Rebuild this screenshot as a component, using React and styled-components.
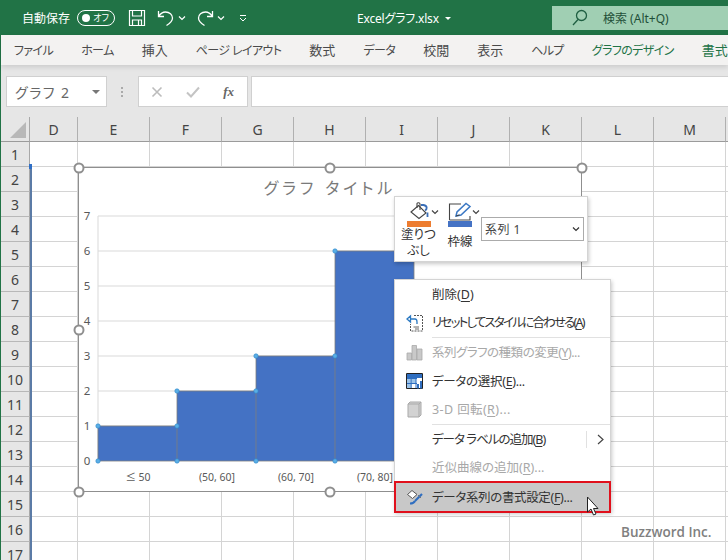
import React from "react";
import styled, { createGlobalStyle } from "styled-components";

const Global = createGlobalStyle`
  html, body { margin: 0; padding: 0; background: #fff; }
  body { font-family: "Noto Sans", "Noto Sans CJK JP", sans-serif; font-feature-settings: "palt"; overflow: hidden; }
  * { box-sizing: border-box; }
`;

const Page = styled.div`
  position: relative; width: 728px; height: 560px; overflow: hidden;
  display: flex; flex-direction: column; background: #fff;
`;
const TitleBar = styled.header`
  height: 35px; flex: none; background: #217346; color: #fff;
  display: flex; align-items: center; font-size: 12px; padding-left: 22px;
`;
const AutoSave = styled.span` width: 55px; `;
const Toggle = styled.span`
  width: 38px; height: 16px; border: 1px solid #fff; border-radius: 8px;
  display: flex; align-items: center; justify-content: space-between; padding: 0 5px 0 4px;
  font-size: 9px; margin-right: 13px;
  &::before { content: ""; width: 8px; height: 8px; border-radius: 50%; background: #fff; }
`;
const QuickIcons = styled.div` display: flex; align-items: center; `;
const Gap = styled.span` width: ${p => p.$w}px; flex: none; `;
const FileName = styled.div`
  margin-left: 110px; display: flex; align-items: center; gap: 6px; white-space: nowrap; font-size: 12px; letter-spacing: -.2px;
  &::after { content: ""; border: 3px solid transparent; border-top: 3px solid #fff; border-bottom: 0; margin-top: 1px; }
`;
const SearchBox = styled.div`
  margin-left: auto; width: 176px; height: 24px; background: #a0cfb3; color: #1f4f38;
  display: flex; align-items: center; padding-left: 20px; gap: 15px; font-size: 12px;
`;
const Body = styled.div`
  flex: 1; display: flex; flex-direction: column; border-left: 1px solid #217346; position: relative; min-height: 0;
`;
const Tabs = styled.nav`
  height: 30px; flex: none; background: #f3f2f1; display: flex; align-items: center; gap: 28px;
  padding: 0 0 1px 13px; white-space: nowrap; position: relative;
  box-shadow: 0 2px 5px rgba(0,0,0,.12);
`;
const Tab = styled.span`
  color: ${p => p.$accent ? "#217346" : "#4a4a4a"};
  font-size: ${p => p.$kanji ? 13 : 12}px;
  letter-spacing: ${p => p.$kanji ? 0 : -0.6}px;
`;
const FormulaArea = styled.div`
  height: 52px; flex: none; background: #e6e6e6; padding: 11px 0 10px 5px; display: flex; align-items: stretch;
`;
const NameBox = styled.div`
  width: 101px; background: #fff; border: 1px solid #d0d0d0; display: flex; align-items: center;
  justify-content: space-between; padding: 0 7px 0 8px; color: #666; font-size: 14px; letter-spacing: 1.5px;
  &::after { content: ""; border: 4px solid transparent; border-top: 4px solid #777; border-bottom: 0; margin-right: -1px; }
`;
const Dots = styled.div`
  width: 31px; display: flex; flex-direction: column; align-items: center; justify-content: center; gap: 2px; padding-right: 2px;
  i { width: 2px; height: 2px; background: #aaa; display: block; }
`;
const FxBox = styled.div`
  width: 110px; background: #fff; border: 1px solid #d0d0d0; display: flex; align-items: center;
  justify-content: space-between; padding: 0 13px 0 12px;
`;
const Fx = styled.span` font-family: "Liberation Serif", serif; font-style: italic; font-weight: 700; font-size: 13px; color: #666; `;
const FormulaInput = styled.div` flex: 1; margin-left: 3px; background: #fff; border: 1px solid #d0d0d0; border-right: 0; `;
const SheetWrap = styled.div` flex: 1; position: relative; min-height: 0; overflow: hidden; `;
const SheetGrid = styled.div`
  display: grid; grid-template-columns: 29px 48px repeat(10, 72px); grid-auto-rows: 25px;
`;
const Corner = styled.div`
  background: #e6e6e6; border-right: 1px solid #a8a8a8; border-bottom: 1px solid #9b9b9b; position: relative;
  &::after { content: ""; position: absolute; right: 3px; bottom: 3px; border-style: solid; border-width: 0 0 16px 16px; border-color: transparent transparent #b8b8b8 transparent; }
`;
const ColHead = styled.div`
  background: #e6e6e6; border-right: 1px solid #b0b0b0; border-bottom: 1px solid #9b9b9b;
  display: flex; align-items: center; justify-content: center; font-size: 14px; color: #444; font-family: "Noto Sans", sans-serif;
`;
const RowHead = styled.div`
  background: #e6e6e6; border-right: 1px solid #a8a8a8; border-bottom: 1px solid #b8b8b8;
  display: flex; align-items: center; justify-content: center; font-size: 14px; color: #444;
`;
const Cell = styled.div` border-right: 1px solid #d4d4d4; border-bottom: 1px solid #d4d4d4; `;
const RangeLine = styled.div`
  position: absolute; left: 29px; top: 49px; bottom: 0; width: 1.5px; background: #5b7ba6;
  &::before { content: ""; position: absolute; left: -1px; top: -2px; width: 3px; height: 5px; background: #2f6fc6; }
`;
const ChartFrame = styled.div`
  position: absolute; left: 77px; top: 50px; width: 504px; height: 325px; background: #fff; border: 1px solid #8f8f8f;
  svg { display: block; position: absolute; left: -1px; top: -1px; }
`;
const Handle = styled.span`
  position: absolute; width: 11px; height: 11px; border-radius: 50%; background: #fff; border: 2px solid #8f8f8f;
  left: ${p => p.$x}px; top: ${p => p.$y}px; transform: translate(-50%, -50%);
`;
const MiniBar = styled.div`
  position: absolute; left: 393px; top: 79px; width: 194px; height: 66px; background: #fff;
  border: 1px solid #d4d4d4; box-shadow: 1px 2px 4px rgba(0,0,0,.22);
  display: flex; align-items: flex-start; padding: 5px 0 0 3px; font-size: 12.5px; color: #333;
`;
const MiniTool = styled.div`
  width: ${p => p.$w}px; flex: none; display: flex; flex-direction: column; align-items: center; line-height: 16px;
  svg { display: block; }
`;
const ToolIcon = styled.div` display: flex; align-items: center; `;
const Swatch = styled.div` width: 24px; height: 6px; background: ${p => p.$c}; margin-left: -8px; margin-bottom: ${p => p.$mb}px; `;
const Label = styled.div` text-align: center; margin-left: -8px; width: 36px; `;
const SeriesSelect = styled.div`
  width: 103px; height: 24px; margin-top: 15px; border: 1px solid #ababab; display: flex; align-items: center;
  justify-content: space-between; padding: 0 3px; font-size: 12px; color: #444; letter-spacing: .5px;
`;
const Menu = styled.div`
  position: absolute; left: 393px; top: 162px; width: 217px; height: 233px; background: #fff;
  border: 1px solid #d4d4d4; box-shadow: 1px 2px 4px rgba(0,0,0,.22); font-size: 12.5px; color: #333;
`;
const Item = styled.div`
  height: ${p => p.$hot ? 30 : 28.6}px; display: flex; align-items: center; white-space: nowrap; position: relative;
  padding-bottom: 2px;
  color: ${p => p.$off ? "#a8a8a8" : "#333"};
  background: ${p => p.$hot ? "#c8c8c8" : "transparent"};
  outline: ${p => p.$hot ? "2px solid #e0101c" : "none"};
  outline-offset: -1px;
  letter-spacing: ${p => p.$ls || 0}px;
  u { text-underline-offset: 2px; }
`;
const IconSlot = styled.span` width: 37px; flex: none; display: flex; justify-content: center; padding-left: 2px; margin-top: 2px; `;
const Sep = styled.div` height: 1px; margin-left: 37px; background: #e1e1e1; `;
const Sub = styled.span`
  position: absolute; right: 6px; top: 6px; height: 17px; width: 18px; border-left: 1px solid #e1e1e1;
  display: flex; align-items: center; justify-content: flex-end;
`;
const Mark = styled.div`
  position: absolute; left: 620px; top: 406px; font-family: "Open Sans", sans-serif; font-weight: 600;
  font-size: 13.5px; color: #808080; white-space: nowrap;
  text-shadow: 0 0 2px #fff, 0 0 2px #fff;
`;
const Cursor = styled.svg` position: absolute; left: 585px; top: 379px; `;

const Chev = ({ c = "#fff", w = 8 }) => (
  <svg width={w} height="6" viewBox="0 0 8 6"><path d="M1 1.5 4 4.5 7 1.5" fill="none" stroke={c} strokeWidth="1.2" /></svg>
);
const Save = () => (
  <svg width="18" height="18" viewBox="0 0 18 18" fill="none" stroke="#fff" strokeWidth="1.2">
    <path d="M1.5 1.5H16.5V16.5H1.5Z" /><path d="M4.5 1.5V7H13.5V1.5M4.5 16.5V11H13.5V16.5M10.5 11.5V16" />
  </svg>
);
const Undo = ({ flip }) => (
  <svg width="17" height="18" viewBox="0 0 17 18" fill="none" stroke="#fff" strokeWidth="1.3" style={flip ? { transform: "scaleX(-1)" } : undefined}>
    <path d="M1.5 2V7.5H7M1.8 7.2C3.4 4.6 5.5 3 8.5 3 12.5 3 15.5 5.6 15.5 9 15.5 12 13.5 14 9.5 16.5" />
  </svg>
);
const Custom = () => (
  <svg width="8" height="8" viewBox="0 0 8 8" fill="none" stroke="#fff" strokeWidth="1"><path d="M1 1.5H7M1 4 4 7 7 4" /></svg>
);
const SearchIcon = () => (
  <svg width="16" height="17" viewBox="0 0 16 17" fill="none" stroke="#1f5f42" strokeWidth="1.3"><circle cx="9.5" cy="6.5" r="5" /><path d="M6 10.5 1 16" /></svg>
);
const FillIcon = () => (
  <svg width="24" height="19" viewBox="0 0 24 19" fill="none" stroke="#444" strokeWidth="1.1">
    <path d="M4 10 11.5 3.5 19 11 12 16.5Z" /><path d="M10 6V1.5C10 .5 13 .5 13 2V8" />
    <path d="M18 8.5C20 7.5 21 4 16.5 3L14 3" stroke="#3b6fb8" strokeWidth="1.8" /><path d="M20.5 10.5V15" stroke="#3b6fb8" strokeWidth="1.8" />
  </svg>
);
const PenIcon = () => (
  <svg width="24" height="19" viewBox="0 0 24 19" fill="none" stroke="#444" strokeWidth="1.1">
    <path d="M1.5 18V2H13M22 14V18H1.5" />
    <path d="M8 14 9 10 18 1.5 22 4.5 13 13Z" fill="#fff" stroke="#3b78c4" strokeWidth="1.5" /><path d="M8 14 11.5 13" stroke="#444" />
  </svg>
);
const ResetIcon = () => (
  <svg width="18" height="18" viewBox="0 0 18 18" fill="none">
    <path d="M8 1.5H16.5V17H4.5V10" stroke="#555" strokeWidth="1" strokeDasharray="2 1" />
    <path d="M1 5 4.5 2V8ZM4 5H9C10.5 5 11 6 11 8V10" stroke="#2b79c2" strokeWidth="1.3" />
    <path d="M7.5 13H13M9 15H13" stroke="#666" strokeWidth="1" />
  </svg>
);
const BarsIcon = () => (
  <svg width="17" height="17" viewBox="0 0 17 17" fill="#c9c9c9" stroke="#aaa" strokeWidth=".8">
    <path d="M1 9H5.5V16H1ZM6 1.5H10.5V16H6ZM11 5H16V16H11Z" />
  </svg>
);
const SelectIcon = () => (
  <svg width="17" height="17" viewBox="0 0 17 17" fill="none">
    <path d="M.5.5H16.5V15.5H.5Z" fill="#fff" stroke="#222" />
    <path d="M1 1H16V5H1Z" fill="#2f6ec0" /><path d="M1 5.5H5V10H1ZM5.5 5.5H10V10H5.5ZM1 10.5H5V15H1Z" fill="#9cc3e8" />
    <path d="M1 5.5H11M1 10.5H11M5.2 1V15M10 1V15" stroke="#2f6ec0" />
    <path d="M11 11H13V15.5H11ZM14 8H16V15.5H14Z" fill="#2f6ec0" />
  </svg>
);
const BoxIcon = () => (
  <svg width="15" height="17" viewBox="0 0 15 17" fill="#d2d2d2" stroke="#a9a9a9">
    <path d="M1 3 3 1H14V14L12 16H1Z" /><path d="M1 3H12V16M12 3 14 1" fill="none" />
  </svg>
);
const BrushIcon = () => (
  <svg width="18" height="16" viewBox="0 0 18 16" fill="none">
    <path d="M1.5 5.5 6 1.5 11 5.5 6.5 9.5Z" fill="#fff" stroke="#555" />
    <path d="M16 5 9 12" stroke="#2f6ec0" strokeWidth="2.2" /><path d="M4 14.5C6 14.5 8 14 9 12" stroke="#2f6ec0" strokeWidth="2.2" />
    <path d="M12 6 15 9" stroke="#777" />
  </svg>
);

const columns = ["D", "E", "F", "G", "H", "I", "J", "K", "L", "M", ""];
const rows = Array.from({ length: 17 }, (_, i) => i + 1);
const tabs = [["ファイル"], ["ホーム"], ["挿入", true], ["ページ レイアウト"], ["数式", true], ["データ"], ["校閲", true], ["表示", true], ["ヘルプ"]];
const gridY = [216, 251, 286, 321, 356, 391, 426];
const yLabels = [7, 6, 5, 4, 3, 2, 1, 0];
const points = [[98, 461], [98, 426], [177, 426], [177, 461], [177, 391], [256, 391], [256, 461], [256, 356], [335, 356], [335, 461], [335, 251], [414, 461]];
const xLabels = [["≤ 50", 138], ["(50, 60]", 217], ["(60, 70]", 296], ["(70, 80]", 375]];
const handles = [[0, 0], [251, 0], [503, 0], [0, 162], [0, 324], [251, 324]];

const Chart = () => (
  <svg width="504" height="325" viewBox="78 167 504 325">
    <text x="330" y="193.5" textAnchor="middle" fontSize="16" fill="#7a7a7a" letterSpacing="3.9">グラフ タイトル</text>
    {gridY.map(y => <line key={y} x1="98" x2="562" y1={y} y2={y} stroke="#d9d9d9" />)}
    <line x1="98" x2="98" y1="216" y2="461" stroke="#d9d9d9" />
    <path d="M98 461V426H177V391H256V356H335V251H414V461Z" fill="#4472c4" stroke="#7f7f7f" strokeWidth=".8" />
    <path d="M177 426V461M256 391V461M335 356V461" stroke="#7f7f7f" strokeWidth=".8" />
    {points.map(([x, y]) => <circle key={x + "-" + y} cx={x} cy={y} r="2.2" fill="#5aaee6" stroke="#2e86c8" strokeWidth=".6" />)}
    {yLabels.map((n, i) => <text key={n} x="87" y={220 + i * 35} textAnchor="middle" fontSize="11.5" fill="#595959">{n}</text>)}
    {xLabels.map(([t, x]) => <text key={t} x={x} y="481" textAnchor="middle" fontSize="10.5" fill="#595959">{t}</text>)}
  </svg>
);

export default function App() {
  return (
    <Page>
      <Global />
      <TitleBar>
        <AutoSave>自動保存</AutoSave>
        <Toggle>オフ</Toggle>
        <QuickIcons>
          <Save /><Gap $w={11} />
          <Undo /><Gap $w={4} /><Chev /><Gap $w={11} />
          <Undo flip /><Gap $w={3} /><Chev /><Gap $w={14} />
          <Custom />
        </QuickIcons>
        <FileName>Excelグラフ.xlsx</FileName>
        <SearchBox><SearchIcon /><span>検索 (Alt+Q)</span></SearchBox>
      </TitleBar>
      <Body>
        <Tabs>
          {tabs.map(([t, k]) => <Tab key={t} $kanji={k}>{t}</Tab>)}
          <Tab $accent>グラフのデザイン</Tab>
          <Tab $accent $kanji>書式</Tab>
        </Tabs>
        <FormulaArea>
          <NameBox>グラフ 2</NameBox>
          <Dots><i /><i /><i /></Dots>
          <FxBox>
            <svg width="12" height="12" viewBox="0 0 12 12" stroke="#bcbcbc" strokeWidth="1.6"><path d="M1.5 1.5 10.5 10.5M10.5 1.5 1.5 10.5" /></svg>
            <svg width="14" height="12" viewBox="0 0 14 12" stroke="#c4c4c4" strokeWidth="2" fill="none"><path d="M1 6.5 5 10.5 13 1.5" /></svg>
            <Fx>fx</Fx>
          </FxBox>
          <FormulaInput />
        </FormulaArea>
        <SheetWrap>
          <SheetGrid>
            <Corner />
            {columns.map((c, i) => <ColHead key={i}>{c}</ColHead>)}
            {rows.map(r => (
              <React.Fragment key={r}>
                <RowHead>{r}</RowHead>
                {columns.map((c, i) => <Cell key={i} />)}
              </React.Fragment>
            ))}
          </SheetGrid>
          <RangeLine />
          <ChartFrame>
            <Chart />
            {handles.map(([x, y]) => <Handle key={x + "-" + y} $x={x} $y={y} />)}
          </ChartFrame>
          <MiniBar>
            <MiniTool $w={49}>
              <ToolIcon><FillIcon /><Chev c="#444" /></ToolIcon>
              <Swatch $c="#ed7d31" $mb={0} />
              <Label>塗りつ<br />ぶし</Label>
            </MiniTool>
            <MiniTool $w={34}>
              <ToolIcon><PenIcon /><Chev c="#444" /></ToolIcon>
              <Swatch $c="#4472c4" $mb={7} />
              <Label>枠線</Label>
            </MiniTool>
            <SeriesSelect><span>系列 1</span><Chev c="#333" /></SeriesSelect>
          </MiniBar>
          <Menu>
            <Item><IconSlot /><span>削除(<u>D</u>)</span></Item>
            <Item $ls={-1.8}><IconSlot><ResetIcon /></IconSlot><span>リセットしてスタイルに合わせる(<u>A</u>)</span></Item>
            <Sep />
            <Item $off $ls={-.5}><IconSlot><BarsIcon /></IconSlot><span>系列グラフの種類の変更(<u>Y</u>)...</span></Item>
            <Item $ls={-.3}><IconSlot><SelectIcon /></IconSlot><span>データの選択(<u>E</u>)...</span></Item>
            <Item $off $ls={.4}><IconSlot><BoxIcon /></IconSlot><span>3-D 回転(<u>R</u>)...</span></Item>
            <Sep />
            <Item $ls={-1}><IconSlot /><span>データ ラベルの追加(<u>B</u>)</span>
              <Sub><svg width="7" height="11" viewBox="0 0 7 11" fill="none" stroke="#444" strokeWidth="1.2"><path d="M1 1 6 5.5 1 10" /></svg></Sub>
            </Item>
            <Item $off><IconSlot /><span>近似曲線の追加(<u>R</u>)...</span></Item>
            <Item $hot $ls={-.35}><IconSlot><BrushIcon /></IconSlot><span>データ系列の書式設定(<u>F</u>)...</span></Item>
          </Menu>
          <Cursor width="15" height="22" viewBox="0 0 15 22">
            <path d="M1.5 1V16L5 13 7.5 19 10 18 7.5 12.5H12Z" fill="#fff" stroke="#222" strokeWidth="1" />
          </Cursor>
          <Mark>Buzzword Inc.</Mark>
        </SheetWrap>
      </Body>
    </Page>
  );
}
